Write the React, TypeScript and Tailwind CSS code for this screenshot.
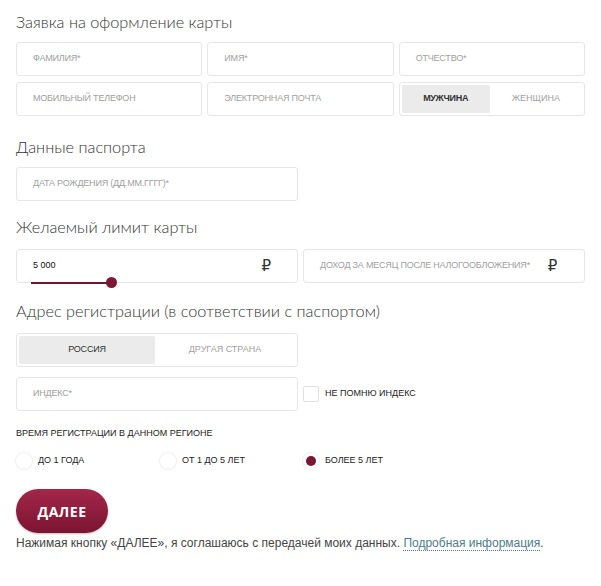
const heading = "text-[16.3px] leading-6 font-light text-[#333] [font-family:Lato,sans-serif]";
const field =
  "h-[34px] rounded-[3px] border border-[#e6e6e6] bg-white flex items-center px-4 text-[9px] uppercase text-[#a0a0a0] tracking-[-0.2px]";

function Field({ label }: { label: string }) {
  return <div className={field}>{label}</div>;
}

function Ruble() {
  return <span className="text-[15px] text-[#333] [font-family:'DejaVu_Sans',sans-serif]">₽</span>;
}

function Radio({ label, checked }: { label: string; checked?: boolean }) {
  return (
    <div className="flex items-center gap-[6px]">
      <span className="w-4 h-4 rounded-full bg-white shadow-[0_0_0_1px_#f0f0f0,0_0_2px_#e5e5e5] flex items-center justify-center">
        {checked && <span className="w-[10px] h-[10px] rounded-full bg-[#7a1533]" />}
      </span>
      <span className="text-[9px] text-[#222]">{label}</span>
    </div>
  );
}

export default function App() {
  return (
    <div className="w-[601px] min-h-[586px] bg-white px-4 pt-[10px] [font-family:'Liberation_Sans',Arial,sans-serif]">
      {/* Personal data */}
      <h1 className={heading}>Заявка на оформление карты</h1>
      <div className="mt-2 grid grid-cols-3 gap-x-[5px] gap-y-[6px]">
        <Field label="Фамилия*" />
        <Field label="Имя*" />
        <Field label="Отчество*" />
        <Field label="Мобильный телефон" />
        <Field label="Электронная почта" />
        <div className="h-[34px] rounded-[3px] border border-[#e6e6e6] flex p-[2px] text-[9px] uppercase">
          <div className="w-[88px] rounded-[2px] bg-[#ebebeb] flex items-center justify-center text-[#333] font-bold tracking-[-0.3px]">
            Мужчина
          </div>
          <div className="flex-1 flex items-center justify-center text-[#a0a0a0]">Женщина</div>
        </div>
      </div>

      {/* Passport */}
      <h2 className={`${heading} mt-[19px]`}>Данные паспорта</h2>
      <div className="mt-2 grid grid-cols-2 gap-x-[5px]">
        <Field label="Дата рождения (дд.мм.гггг)*" />
      </div>

      {/* Limit */}
      <h2 className={`${heading} mt-[14px]`}>Желаемый лимит карты</h2>
      <div className="mt-[10px] grid grid-cols-2 gap-x-[5px]">
        <div className="relative">
          <div className="h-[34px] rounded-[3px] border border-[#e6e6e6] flex items-center justify-between pl-4 pr-[26px]">
            <span className="text-[9px] text-[#111]">5 000</span>
            <Ruble />
          </div>
          <div className="absolute left-[15px] top-[33px] w-[81px] h-[2px] bg-[#6e1530]" />
          <div className="absolute left-[90px] top-[28px] w-[11px] h-[11px] rounded-full bg-[#7d1736]" />
        </div>
        <div className="h-[34px] rounded-[3px] border border-[#e6e6e6] flex items-center justify-between pl-4 pr-[27px] text-[9px] uppercase text-[#a0a0a0] tracking-[-0.2px]">
          <span>Доход за месяц после налогообложения*</span>
          <Ruble />
        </div>
      </div>

      {/* Address */}
      <h2 className={`${heading} mt-[16px]`}>Адрес регистрации (в соответствии с паспортом)</h2>
      <div className="mt-[10px] grid grid-cols-2 gap-x-[5px]">
        <div className="h-[34px] rounded-[3px] border border-[#e6e6e6] flex p-[2px] text-[9px] uppercase">
          <div className="w-[136px] rounded-[2px] bg-[#ebebeb] flex items-center justify-center text-[#333] tracking-[-0.2px]">
            Россия
          </div>
          <div className="flex-1 flex items-center justify-center text-[#a0a0a0]">Другая страна</div>
        </div>
      </div>
      <div className="mt-[10px] grid grid-cols-2 gap-x-[5px]">
        <Field label="Индекс*" />
        <div className="flex items-center gap-[6px]">
          <span className="w-4 h-4 rounded-[2px] border border-[#e0e0e0] bg-white" />
          <span className="text-[9px] text-[#222]">НЕ ПОМНЮ ИНДЕКС</span>
        </div>
      </div>

      {/* Registration period */}
      <div className="mt-[16px] text-[9px] leading-3 text-[#222] uppercase">Время регистрации в данном регионе</div>
      <div className="mt-[14px] grid grid-cols-[144px_143px_1fr]">
        <Radio label="ДО 1 ГОДА" />
        <Radio label="ОТ 1 ДО 5 ЛЕТ" />
        <Radio label="БОЛЕЕ 5 ЛЕТ" checked />
      </div>

      <button className="mt-[20px] w-[92px] h-[44px] rounded-full bg-gradient-to-b from-[#a3274a] to-[#7c1432] shadow-[0_1px_2px_rgba(0,0,0,0.25)] text-white text-[14px] font-bold tracking-[0.5px] [font-family:'Open_Sans',sans-serif]">
        ДАЛЕЕ
      </button>
      <p className="mt-[2px] text-[12px] leading-4 text-[#444]">
        Нажимая кнопку «ДАЛЕЕ», я соглашаюсь с передачей моих данных.{" "}
        <a className="text-[#4b7d8c] border-b border-dotted border-[#4b7d8c]">Подробная информация</a>.
      </p>
    </div>
  );
}
